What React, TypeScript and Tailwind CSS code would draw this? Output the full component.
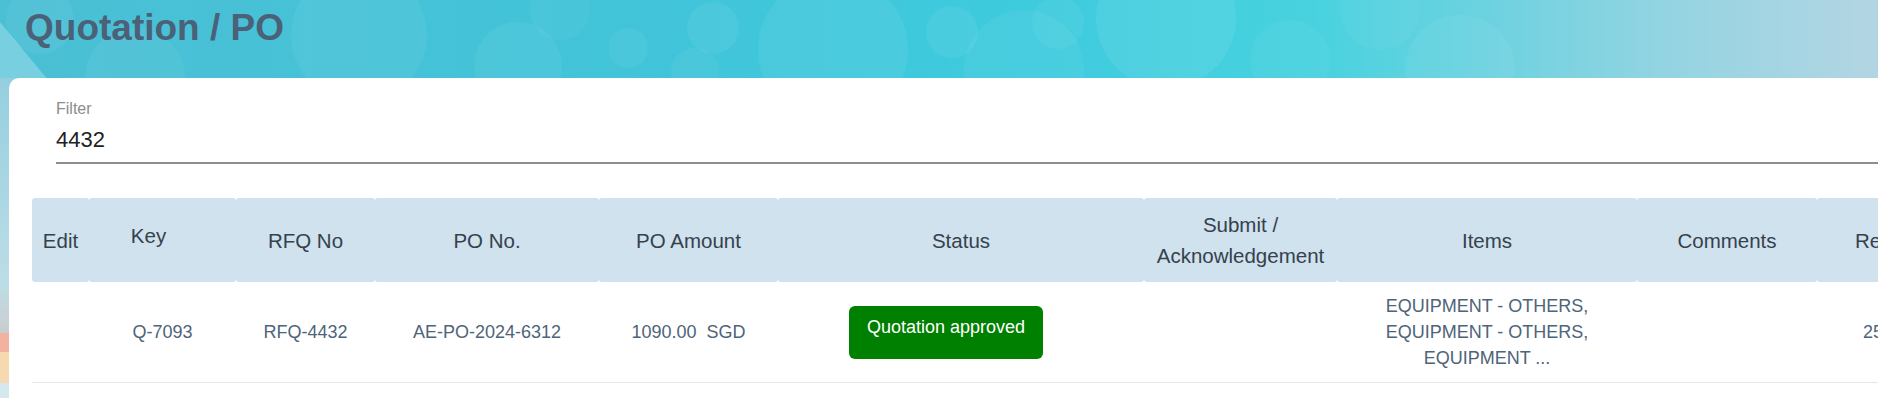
import React from "react";

const bubbles: [number, number, number, number][] = [
  [359, 35, 68, 0.06],
  [135, 78, 50, 0.05],
  [518, 66, 44, 0.05],
  [628, 48, 20, 0.05],
  [560, 10, 30, 0.04],
  [695, 72, 24, 0.05],
  [713, 28, 26, 0.06],
  [833, 50, 75, 0.06],
  [952, 32, 26, 0.06],
  [1024, 70, 60, 0.05],
  [1058, 23, 26, 0.05],
  [1166, 18, 70, 0.07],
  [1290, 60, 40, 0.04],
  [1460, 70, 55, 0.05],
  [1380, 10, 40, 0.04],
  [40, 20, 34, 0.05],
];

function Background() {
  return (
    <svg
      className="absolute inset-0"
      width="1878"
      height="398"
      viewBox="0 0 1878 398"
      aria-hidden="true"
    >
      <defs>
        <linearGradient id="band" x1="0" y1="0" x2="1" y2="0">
          <stop offset="0" stopColor="#4bbfd4" />
          <stop offset="0.35" stopColor="#41c4d9" />
          <stop offset="0.55" stopColor="#3ecbde" />
          <stop offset="0.7" stopColor="#48d2df" />
          <stop offset="0.8" stopColor="#70d2e0" />
          <stop offset="0.9" stopColor="#98d4e2" />
          <stop offset="1" stopColor="#b3d5e3" />
        </linearGradient>
        <linearGradient id="strip" x1="0" y1="0" x2="0" y2="1">
          <stop offset="0" stopColor="#94cfdf" />
          <stop offset="0.8" stopColor="#bcdde7" />
          <stop offset="0.93" stopColor="#c6d3d7" />
          <stop offset="1" stopColor="#c8cdcf" />
        </linearGradient>
      </defs>
      <rect x="0" y="0" width="1878" height="398" fill="url(#band)" />
      {bubbles.map(([cx, cy, r, o], i) => (
        <circle key={i} cx={cx} cy={cy} r={r} fill="#ffffff" fillOpacity={o} />
      ))}
      <polygon points="0,22 48,80 0,80" fill="#ffffff" fillOpacity="0.25" />
      <rect x="0" y="78" width="30" height="255" fill="url(#strip)" />
      <rect x="0" y="333" width="30" height="19" fill="#f3b2a0" />
      <rect x="0" y="352" width="30" height="31" fill="#f6d9ae" />
      <rect x="0" y="383" width="30" height="15" fill="#d3e9ef" />
    </svg>
  );
}

const th =
  "h-[84px] p-0 bg-[#cfe2ee] rounded-[3px] font-normal text-[20.5px] leading-[31px] text-[#36414c] text-center align-middle";
const td =
  "h-[101px] p-0 border-b border-[#e6e6e6] text-[18px] leading-[26px] text-[#4e6479] text-center align-middle";

export default function App() {
  return (
    <div className="relative w-full h-[398px] overflow-hidden font-['Liberation_Sans',Arial,sans-serif]">
      <Background />
      <div className="relative flex flex-col">
        <h1 className="h-[78px] pl-[25px] pt-[9px] text-[37px] leading-none font-bold text-[#4b6178]">
          Quotation / PO
        </h1>
        <div className="ml-[9px] w-[1900px] h-[320px] bg-white rounded-tl-[10px]">
          <div className="pl-[47px] pt-[23px]">
            <div className="text-[16px] leading-none text-[#8c8c8c]">Filter</div>
            <div className="mt-[12px] pb-[11px] border-b-2 border-[#8e8e8e] text-[22px] leading-none text-[#222222]">
              4432
            </div>
          </div>
          <div className="pl-[23px] pt-[34px]">
            <table className="table-fixed border-separate border-spacing-0 w-[1985px]">
              <colgroup>
                <col className="w-[57px]" />
                <col className="w-[147px]" />
                <col className="w-[139px]" />
                <col className="w-[224px]" />
                <col className="w-[179px]" />
                <col className="w-[366px]" />
                <col className="w-[193px]" />
                <col className="w-[300px]" />
                <col className="w-[180px]" />
                <col className="w-[200px]" />
              </colgroup>
              <thead>
                <tr>
                  <th className={th}>Edit</th>
                  <th className={th + " pr-[28px] pb-[10px]"}>Key</th>
                  <th className={th}>RFQ No</th>
                  <th className={th}>PO No.</th>
                  <th className={th}>PO Amount</th>
                  <th className={th}>Status</th>
                  <th className={th}>
                    Submit /
                    <br />
                    Acknowledgement
                  </th>
                  <th className={th}>Items</th>
                  <th className={th}>Comments</th>
                  <th className={th + " !text-left pl-[38px] whitespace-nowrap"}>Request Date</th>
                </tr>
              </thead>
              <tbody>
                <tr>
                  <td className={td}></td>
                  <td className={td}>Q-7093</td>
                  <td className={td}>RFQ-4432</td>
                  <td className={td}>AE-PO-2024-6312</td>
                  <td className={td + " whitespace-pre"}>{"1090.00  SGD"}</td>
                  <td className={td + " pr-[30px]"}>
                    <span className="inline-block bg-[#008000] text-white text-[18px] leading-[21px] pt-[11px] pb-[21px] px-[18px] rounded-[6px]">
                      Quotation approved
                    </span>
                  </td>
                  <td className={td}></td>
                  <td className={td}>
                    <span className="block">EQUIPMENT - OTHERS,</span>
                    <span className="block">EQUIPMENT - OTHERS,</span>
                    <span className="block">EQUIPMENT ...</span>
                  </td>
                  <td className={td}></td>
                  <td className={td + " !text-left pl-[46px] whitespace-nowrap"}>25/03/2024</td>
                </tr>
              </tbody>
            </table>
          </div>
        </div>
      </div>
    </div>
  );
}
